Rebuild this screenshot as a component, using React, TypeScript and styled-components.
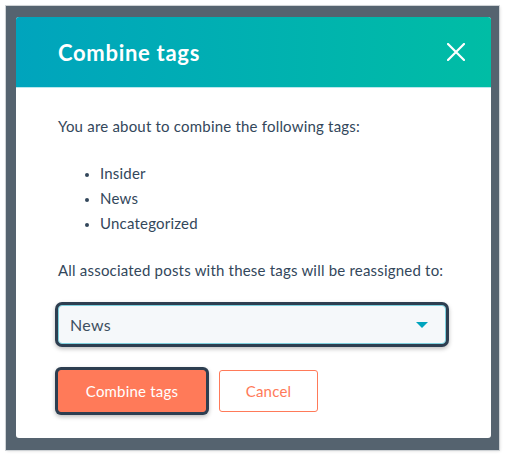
import React from "react";
import styled, { createGlobalStyle } from "styled-components";

const Global = createGlobalStyle`
  html, body { margin: 0; padding: 0; background: #ffffff; }
  body { font-family: Lato, "Open Sans", sans-serif; }
  * { box-sizing: border-box; }
`;

const Page = styled.div`
  width: 505px;
  height: 456px;
  padding: 6px 6px 6px 6px;
`;

const Overlay = styled.div`
  width: 493px;
  height: 444px;
  background: #55636f;
  box-shadow: 0 0 0 1px #cfd3d6, 1px 1px 3px rgba(0, 0, 0, 0.15);
  padding: 11px 8px 12px 10px;
  display: flex;
  flex-direction: column;
`;

const Modal = styled.div`
  flex: 1;
  background: #ffffff;
  border-radius: 3px;
  overflow: hidden;
  display: flex;
  flex-direction: column;
`;

const Header = styled.div`
  height: 71px;
  flex: none;
  background: linear-gradient(90deg, #00a4bd 0%, #00bda5 100%);
  border-bottom: 1px solid #b9e7ed;
  display: flex;
  align-items: center;
  justify-content: space-between;
  padding: 0 25px 0 42px;
`;

const Title = styled.h1`
  margin: 0;
  color: #ffffff;
  font-family: Lato, sans-serif;
  font-weight: 700;
  font-size: 22px;
  letter-spacing: 0.7px;
`;

const CloseButton = styled.button`
  width: 20px;
  height: 20px;
  border: 0;
  padding: 0;
  background: transparent;
  display: flex;
  align-items: center;
  justify-content: center;
  cursor: pointer;
`;

const Body = styled.div`
  padding: 26px 42px 0 42px;
  color: #33475b;
  font-size: 15px;
  line-height: 24px;
  letter-spacing: 0.2px;
`;

const Paragraph = styled.p`
  margin: 0;
`;

const TagList = styled.ul`
  margin: 23px 0 22px 0;
  padding: 0 0 0 42px;
  list-style: disc;
  line-height: 25px;
  li::marker { font-size: 12px; }
`;

const SelectBox = styled.div`
  margin: 23px 3px 0 0;
  height: 39px;
  border-radius: 4px;
  background: #f5f8fa;
  border: 1px solid #7fd1de;
  box-shadow: 0 0 0 3px #2d3e50, 0 2px 4px 3px rgba(0, 0, 0, 0.25);
  display: flex;
  align-items: center;
  justify-content: space-between;
  padding: 0 17px 0 11px;
  color: #3d4f61;
  font-size: 16px;
  letter-spacing: 0.3px;
`;

const Actions = styled.div`
  display: flex;
  gap: 13px;
  margin-top: 26px;
`;

const PrimaryButton = styled.button<{ $focused?: boolean }>`
  height: 42px;
  width: 148px;
  border-radius: 3px;
  border: 1px solid #ff7a59;
  background: #ff7a59;
  color: #ffffff;
  font-family: Lato, sans-serif;
  font-size: 15px;
  letter-spacing: 0.2px;
  box-shadow: ${(p) => (p.$focused ? "0 0 0 3px #2d3e50, 0 2px 4px 3px rgba(0,0,0,0.25)" : "none")};
`;

const SecondaryButton = styled.button`
  height: 42px;
  width: 99px;
  border-radius: 3px;
  border: 1px solid #ff7a59;
  background: #ffffff;
  color: #ff7a59;
  font-family: Lato, sans-serif;
  font-size: 15px;
  letter-spacing: 0.2px;
`;

export default function App() {
  return (
    <>
      <Global />
      <Page>
        <Overlay>
          <Modal>
            <Header>
              <Title>Combine tags</Title>
              <CloseButton aria-label="Close">
                <svg width="18" height="18" viewBox="0 0 18 18">
                  <path d="M1 1 L17 17 M17 1 L1 17" stroke="#ffffff" strokeWidth="2.2" strokeLinecap="round" />
                </svg>
              </CloseButton>
            </Header>
            <Body>
              <Paragraph>You are about to combine the following tags:</Paragraph>
              <TagList>
                <li>Insider</li>
                <li>News</li>
                <li>Uncategorized</li>
              </TagList>
              <Paragraph>All associated posts with these tags will be reassigned to:</Paragraph>
              <SelectBox>
                <span>News</span>
                <svg width="12" height="6" viewBox="0 0 12 6">
                  <path d="M0 0 L12 0 L6 6 Z" fill="#00a4bd" />
                </svg>
              </SelectBox>
              <Actions>
                <PrimaryButton $focused>Combine tags</PrimaryButton>
                <SecondaryButton>Cancel</SecondaryButton>
              </Actions>
            </Body>
          </Modal>
        </Overlay>
      </Page>
    </>
  );
}
